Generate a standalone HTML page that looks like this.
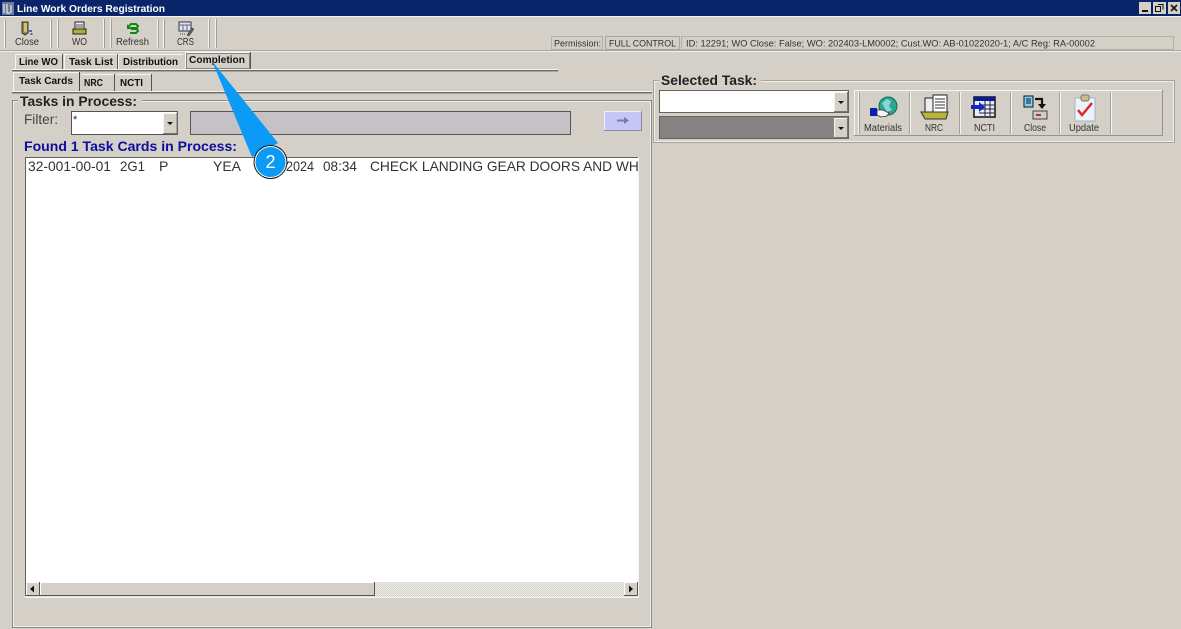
<!DOCTYPE html>
<html><head><meta charset="utf-8"><title>Line Work Orders Registration</title>
<style>
html,body{margin:0;padding:0;background:#d4d0c8;width:1181px;height:629px;overflow:hidden}
svg{display:block}
text{font-family:"Liberation Sans",sans-serif;fill:#222}
.t{font-size:10px;fill:#333}
.b{font-size:10px;font-weight:bold;fill:#111}
</style></head><body>
<svg width="1181" height="629" viewBox="0 0 1181 629" xmlns="http://www.w3.org/2000/svg">
<defs>
<pattern id="dither" width="2" height="2" patternUnits="userSpaceOnUse"><rect width="2" height="2" fill="#eceae5"/><rect width="1" height="1" fill="#d8d5ce"/><rect x="1" y="1" width="1" height="1" fill="#d8d5ce"/></pattern>
</defs>
<rect width="1181" height="629" fill="#d4d0c8"/>
<!-- title bar -->
<rect x="0" y="0" width="1181" height="16" fill="#0a246a"/>
<rect x="2" y="2" width="12" height="13" fill="#6d7a99"/>
<path d="M4 4v9M7 4v9h3M11 5v8" stroke="#e8e8e8" stroke-width="1.2" fill="none"/>
<text x="17" y="12" font-size="10" font-weight="bold" style="fill:#fff" textLength="148" lengthAdjust="spacingAndGlyphs">Line Work Orders Registration</text>
<g>
<rect x="1139" y="2" width="12" height="12" fill="#d4d0c8"/><rect x="1142" y="10" width="6" height="2" fill="#111"/>
<rect x="1153" y="2" width="13" height="12" fill="#d4d0c8"/><path d="M1158 4.500h5v5M1155.500 6.500h5v5h-5z" stroke="#111" fill="none"/>
<rect x="1168" y="2" width="12" height="12" fill="#d4d0c8"/><path d="M1171 5l6 6M1177 5l-6 6" stroke="#111" stroke-width="1.600"/>
</g>
<rect x="0" y="16" width="1181" height="1" fill="#f4f3ef"/>
<!-- toolbar grips -->
<g fill="#f5f4f0">
<rect x="4" y="19" width="1" height="29"/><rect x="50" y="19" width="1" height="29"/><rect x="57" y="19" width="1" height="29"/><rect x="103" y="19" width="1" height="29"/><rect x="110" y="19" width="1" height="29"/><rect x="157" y="19" width="1" height="29"/><rect x="163" y="19" width="1" height="29"/><rect x="208" y="19" width="1" height="29"/><rect x="215" y="19" width="1" height="29"/>
</g>
<g fill="#a09d96">
<rect x="5" y="19" width="1" height="29"/><rect x="51" y="19" width="1" height="29"/><rect x="58" y="19" width="1" height="29"/><rect x="104" y="19" width="1" height="29"/><rect x="111" y="19" width="1" height="29"/><rect x="158" y="19" width="1" height="29"/><rect x="164" y="19" width="1" height="29"/><rect x="209" y="19" width="1" height="29"/><rect x="216" y="19" width="1" height="29"/>
</g>
<!-- toolbar icons -->
<path d="M22 22h6v11l-3 2-3-2z" fill="#8f8a3a" stroke="#333"/><rect x="24" y="23" width="3" height="9" fill="#c9c47a"/><path d="M29 31h3M30.500 34h2" stroke="#2244aa" stroke-width="1.500"/>
<rect x="75" y="22" width="9" height="7" fill="#eee" stroke="#222"/><path d="M76 25h7M76 27h7" stroke="#555"/><path d="M73 29h13v5H73z" fill="#b4ac34" stroke="#222"/>
<path d="M128 27l3-3h5l2 2-1 2h-7" fill="none" stroke="#118811" stroke-width="2"/><path d="M131 29h6l1 2-2 2h-6" fill="none" stroke="#118811" stroke-width="2"/><path d="M127 24v5h4" fill="#118811"/>
<rect x="179" y="22" width="12" height="9" fill="#dfe4f2" stroke="#334"/><path d="M179 25h12M183 25v6M187 25v6" stroke="#667"/><path d="M187 35l5-7 2 1-5 7z" fill="#665" stroke="#222" stroke-width=".5"/><path d="M180 34h5" stroke="#555" stroke-dasharray="1 1"/>
<text class="t" x="15" y="45" textLength="24" lengthAdjust="spacingAndGlyphs">Close</text>
<text class="t" x="72" y="45" textLength="15" lengthAdjust="spacingAndGlyphs">WO</text>
<text class="t" x="116" y="45" textLength="33" lengthAdjust="spacingAndGlyphs">Refresh</text>
<text class="t" x="177" y="45" textLength="17" lengthAdjust="spacingAndGlyphs">CRS</text>
<rect x="0" y="50" width="1181" height="1" fill="#a8a59e"/><rect x="0" y="51" width="1181" height="1" fill="#efeeea"/>
<!-- status panels -->
<rect x="551.500" y="36.500" width="51" height="13" fill="#d4d0c8" stroke="#b3b0a8"/>
<rect x="605.500" y="36.500" width="74" height="13" fill="#d4d0c8" stroke="#a8a59e"/>
<rect x="681.500" y="36.500" width="492" height="13" fill="#d4d0c8" stroke="#b3b0a8"/>
<text x="554" y="46.500" font-size="9.500" style="fill:#333" textLength="47" lengthAdjust="spacingAndGlyphs">Permission:</text>
<text x="609" y="46.500" font-size="9.500" style="fill:#333" textLength="67" lengthAdjust="spacingAndGlyphs">FULL CONTROL</text>
<text x="686" y="46.500" font-size="9.500" style="fill:#333" textLength="409" lengthAdjust="spacingAndGlyphs">ID: 12291; WO Close: False; WO: 202403-LM0002; Cust.WO: AB-01022020-1; A/C Reg: RA-00002</text>
<!-- main tabs -->
<rect x="12" y="69" width="546" height="1" fill="#f5f4f0"/><rect x="12" y="70" width="546" height="1" fill="#6c6a65"/><rect x="12" y="71" width="546" height="1" fill="#a8a59e"/>
<path d="M15.500 69V54.500H62.500V69" fill="none" stroke="#f5f4f0"/><path d="M62.500 54V69" stroke="#555"/>
<path d="M64.500 69V54.500H117.500" fill="none" stroke="#f5f4f0"/><path d="M117.500 54V69" stroke="#555"/>
<path d="M118.500 69V54.500H183" fill="none" stroke="#f5f4f0"/>
<path d="M185.500 68V52.500H250.500" fill="none" stroke="#f5f4f0"/><path d="M250.500 52V69" stroke="#555" stroke-width="1"/>
<rect x="186.500" y="53.500" width="63" height="15" fill="none" stroke="#333" stroke-dasharray="1 1"/>
<text class="b" x="19" y="65" textLength="39" lengthAdjust="spacingAndGlyphs">Line WO</text>
<text class="b" x="69" y="65" textLength="44" lengthAdjust="spacingAndGlyphs">Task List</text>
<text class="b" x="123" y="65" textLength="55" lengthAdjust="spacingAndGlyphs">Distribution</text>
<text class="b" x="189" y="63" textLength="56" lengthAdjust="spacingAndGlyphs">Completion</text>
<!-- sub tabs -->
<rect x="12" y="91" width="640" height="1" fill="#f5f4f0"/><rect x="12" y="92" width="640" height="1" fill="#6c6a65"/><rect x="12" y="93" width="640" height="1" fill="#a8a59e"/>
<path d="M13.500 91V72.500H79.500" fill="none" stroke="#f5f4f0"/><path d="M79.500 72V91" stroke="#444"/>
<path d="M81.500 74.500H114.500" fill="none" stroke="#f5f4f0"/><path d="M114.500 74V91" stroke="#555"/>
<path d="M116.500 74.500H151.500" fill="none" stroke="#f5f4f0"/><path d="M151.500 74V91" stroke="#555"/>
<text class="b" x="19" y="84" textLength="54" lengthAdjust="spacingAndGlyphs">Task Cards</text>
<text class="b" x="84" y="86" textLength="19" lengthAdjust="spacingAndGlyphs">NRC</text>
<text class="b" x="120" y="86" textLength="23" lengthAdjust="spacingAndGlyphs">NCTI</text>
<!-- left group -->
<rect x="12.500" y="100.500" width="639" height="527" fill="none" stroke="#8c8a84"/>
<rect x="13.500" y="101.500" width="637" height="525" fill="none" stroke="#efeeea"/>
<rect x="18" y="95" width="124" height="14" fill="#d4d0c8"/>
<text x="20" y="106" font-size="14" font-weight="bold" style="fill:#222" textLength="117" lengthAdjust="spacingAndGlyphs">Tasks in Process:</text>
<text x="24" y="124" font-size="14" style="fill:#444" textLength="34" lengthAdjust="spacingAndGlyphs">Filter:</text>
<!-- filter combo -->
<rect x="71.500" y="111.500" width="106" height="23" fill="#fff" stroke="#555"/>
<rect x="163" y="113" width="14" height="21" fill="#d4d0c8"/><path d="M163.500 133.500V113.500H176" stroke="#f5f4f0" fill="none"/><path d="M163 133.500H177V113" stroke="#777" fill="none"/>
<path d="M167 122h6l-3 3z" fill="#111"/>
<text x="73" y="123" font-size="11" style="fill:#1a1a88">*</text>
<rect x="190.500" y="111.500" width="380" height="23" fill="#c4c2c4" stroke="#555"/>
<!-- arrow button -->
<rect x="604" y="111" width="38" height="20" fill="#c6c6f4"/><path d="M604.500 130.500V111.500H642" stroke="#eeeeff" fill="none"/><path d="M604 130.500H641.500V111" stroke="#8c8aa0" fill="none"/>
<path d="M617 119.500h7v-2.500l5 3.500-5 3.500v-2.500h-7z" fill="#6a7fa8"/>
<text x="24" y="151" font-size="14" font-weight="bold" style="fill:#0d0da0" textLength="213" lengthAdjust="spacingAndGlyphs">Found 1 Task Cards in Process:</text>
<!-- list -->
<rect x="25" y="157" width="613" height="440" fill="#fff"/>
<path d="M25.500 596V157.500H638" fill="none" stroke="#66645f"/>
<path d="M638.500 157V597.500H25" fill="none" stroke="#f5f4f0"/>
<g font-size="14" style="fill:#333">
<text x="28" y="171" style="fill:#333" textLength="83" lengthAdjust="spacingAndGlyphs">32-001-00-01</text>
<text x="120" y="171" style="fill:#333" textLength="25" lengthAdjust="spacingAndGlyphs">2G1</text>
<text x="159" y="171" style="fill:#333">P</text>
<text x="213" y="171" style="fill:#333" textLength="28" lengthAdjust="spacingAndGlyphs">YEA</text>
<text x="258" y="171" style="fill:#333" textLength="56" lengthAdjust="spacingAndGlyphs">1/03/2024</text>
<text x="323" y="171" style="fill:#333" textLength="34" lengthAdjust="spacingAndGlyphs">08:34</text>
</g>
<svg x="370" y="157" width="268" height="20"><text x="0" y="14" font-size="14" style="fill:#333" textLength="278" lengthAdjust="spacingAndGlyphs">CHECK LANDING GEAR DOORS AND WHE</text></svg>
<!-- h scrollbar -->
<rect x="26" y="582" width="612" height="15" fill="url(#dither)"/>
<rect x="26" y="582" width="14" height="14" fill="#d4d0c8"/><path d="M26.500 595V582.500H39.500" stroke="#fff" fill="none"/><path d="M26 595.500H39.500V582" stroke="#555" fill="none"/>
<path d="M34 585.500v7l-4-3.500z" fill="#111"/>
<rect x="40" y="582" width="335" height="14" fill="#d4d0c8"/><path d="M40.500 595V582.500H375" stroke="#fff" fill="none"/><path d="M40 595.500H374.500V582" stroke="#555" fill="none"/>
<rect x="624" y="582" width="14" height="14" fill="#d4d0c8"/><path d="M624.500 595V582.500H637.500" stroke="#fff" fill="none"/><path d="M624 595.500H637.500V582" stroke="#555" fill="none"/>
<path d="M629 585.500v7l4-3.500z" fill="#111"/>
<!-- right group -->
<rect x="653.500" y="80.500" width="521" height="62" fill="none" stroke="#a5a29b"/>
<rect x="654.500" y="81.500" width="519" height="60" fill="none" stroke="#f0efeb"/>
<rect x="659" y="73" width="102" height="14" fill="#d4d0c8"/>
<text x="661" y="85" font-size="14" font-weight="bold" style="fill:#222" textLength="96" lengthAdjust="spacingAndGlyphs">Selected Task:</text>
<!-- right combos -->
<rect x="659.500" y="90.500" width="189" height="22" fill="#fff" stroke="#66645f"/>
<rect x="834" y="92" width="14" height="20" fill="#d4d0c8"/><path d="M834.500 111V92.500H847" stroke="#f5f4f0" fill="none"/><path d="M834 111.500H847.500V92" stroke="#777" fill="none"/>
<path d="M838 101h6l-3 3z" fill="#111"/>
<rect x="659.500" y="116.500" width="189" height="22" fill="#868482" stroke="#66645f"/>
<rect x="834" y="118" width="14" height="20" fill="#d4d0c8"/><path d="M834.500 137V118.500H847" stroke="#f5f4f0" fill="none"/><path d="M834 137.500H847.500V118" stroke="#777" fill="none"/>
<path d="M838 127h6l-3 3z" fill="#111"/>
<!-- right toolbar -->
<path d="M854.500 136V90.500H1163" stroke="#f5f4f0" fill="none"/><path d="M854 135.500H1162.500V90" stroke="#96938c" fill="none"/>
<g fill="#f5f4f0"><rect x="858" y="92" width="1" height="42"/><rect x="910" y="92" width="1" height="42"/><rect x="960" y="92" width="1" height="42"/><rect x="1011" y="92" width="1" height="42"/><rect x="1060" y="92" width="1" height="42"/><rect x="1111" y="92" width="1" height="42"/></g>
<g fill="#a5a29b"><rect x="859" y="92" width="1" height="42"/><rect x="909" y="92" width="1" height="42"/><rect x="959" y="92" width="1" height="42"/><rect x="1010" y="92" width="1" height="42"/><rect x="1059" y="92" width="1" height="42"/><rect x="1110" y="92" width="1" height="42"/></g>
<!-- materials icon -->
<circle cx="888" cy="106" r="9" fill="#2aa88c" stroke="#1a6a50"/><path d="M882 103l5-4 4 2-2 5 3 4-5 2-3-5z" fill="#8ad4e0"/>
<rect x="870" y="108" width="7" height="8" fill="#0a1fb0"/><path d="M877 110h6l6 3-2 3-6 1-4-2z" fill="#f4f4f4" stroke="#333" stroke-width=".8"/>
<!-- nrc icon -->
<path d="M925 98h22v18h-22z" fill="#eee" stroke="#222"/><path d="M933 95h14v17h-14z" fill="#fff" stroke="#222"/><path d="M935 99h10M935 102h10M935 105h10M935 108h10" stroke="#333"/><path d="M921 112h27l-2 7h-21z" fill="#b9b33a" stroke="#333"/>
<!-- ncti icon -->
<rect x="974" y="97" width="21" height="20" fill="#e8ecf8" stroke="#111" stroke-width="1.500"/><rect x="974" y="97" width="21" height="4" fill="#0a1a9a"/><path d="M985 101v15M990 101v15M979 105h15M979 109h15M979 113h15" stroke="#223"/>
<path d="M971 105h8v-3l6 5-6 5v-3h-8z" fill="#1226c8"/>
<!-- close icon -->
<rect x="1024" y="96" width="9" height="11" fill="#7fd4e8" stroke="#113"/><path d="M1026 99h5M1026 101h5M1026 103h5" stroke="#113"/>
<path d="M1035 99h7v6" fill="none" stroke="#111" stroke-width="2.200"/><path d="M1038 104h8l-4 5z" fill="#111"/>
<rect x="1033" y="111" width="14" height="8" fill="#cfccc5" stroke="#444"/><rect x="1036" y="114" width="5" height="2" fill="#b03040"/>
<!-- update icon -->
<rect x="1075" y="98" width="20" height="23" fill="#eef2fa" stroke="#a9b2cc"/><rect x="1081" y="95" width="8" height="6" rx="2" fill="#c9bc86" stroke="#776"/>
<path d="M1078 110l4 5 10-12" fill="none" stroke="#d82a2a" stroke-width="2.500"/>
<text class="t" x="864" y="131" textLength="38" lengthAdjust="spacingAndGlyphs">Materials</text>
<text class="t" x="925" y="131" textLength="18" lengthAdjust="spacingAndGlyphs">NRC</text>
<text class="t" x="974" y="131" textLength="21" lengthAdjust="spacingAndGlyphs">NCTI</text>
<text class="t" x="1024" y="131" textLength="22" lengthAdjust="spacingAndGlyphs">Close</text>
<text class="t" x="1069" y="131" textLength="30" lengthAdjust="spacingAndGlyphs">Update</text>
<!-- callout -->
<path d="M212 61L278 143L252 157Z" fill="#0b9bf7"/>
<circle cx="270.500" cy="162" r="17" fill="#111"/>
<circle cx="270.500" cy="162" r="16" fill="#fff"/>
<circle cx="270.500" cy="162" r="15" fill="#0b9bf7"/>
<text x="270.500" y="168" font-size="18" text-anchor="middle" style="fill:#fff">2</text>
</svg>
</body></html>
